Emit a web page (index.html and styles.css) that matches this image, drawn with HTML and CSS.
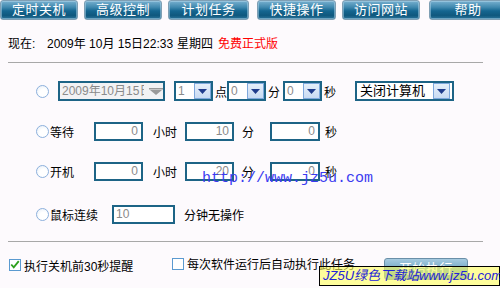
FILE: index.html
```html
<!DOCTYPE html>
<html>
<head>
<meta charset="utf-8">
<link rel="stylesheet" href="styles.css">
</head>
<body>
<div class="app">
  <div class="toolbar">
    <div class="tbtn">定时关机</div>
    <div class="tbtn">高级控制</div>
    <div class="tbtn">计划任务</div>
    <div class="tbtn">快捷操作</div>
    <div class="tbtn">访问网站</div>
    <div class="tbtn">帮助</div>
  </div>
  <div class="status">
    <span class="now">现在:</span>
    <span class="date">2009年 10月 15日22:33</span>
    <span class="week">星期四</span>
    <span class="free">免费正式版</span>
  </div>
  <div class="rule"></div>
  <div class="rows">
    <div class="row">
      <span class="radio"></span>
      <div class="combo combo-date">
        <span class="ctext">2009年10月15日</span>
        <svg class="darr" width="14" height="8" viewBox="0 0 14 8"><rect x="0" y="0" width="14" height="1.5" fill="#9a9a9a"/><polygon points="1,2 13,2 7,7" fill="#9a9a9a"/></svg>
      </div>
      <div class="combo combo-num">
        <span class="ctext">1</span>
        <span class="abtn"><svg width="9" height="5" viewBox="0 0 9 5"><polygon points="0,0 9,0 4.5,5" fill="#1f3c8c"/></svg></span>
      </div>
      <span class="u1">点</span>
      <div class="combo combo-num">
        <span class="ctext">0</span>
        <span class="abtn"><svg width="9" height="5" viewBox="0 0 9 5"><polygon points="0,0 9,0 4.5,5" fill="#1f3c8c"/></svg></span>
      </div>
      <span class="u2">分</span>
      <div class="combo combo-num">
        <span class="ctext">0</span>
        <span class="abtn"><svg width="9" height="5" viewBox="0 0 9 5"><polygon points="0,0 9,0 4.5,5" fill="#1f3c8c"/></svg></span>
      </div>
      <span class="u3">秒</span>
      <div class="combo combo-act">
        <span class="ctext act">关闭计算机</span>
        <span class="abtn"><svg width="9" height="5" viewBox="0 0 9 5"><polygon points="0,0 9,0 4.5,5" fill="#1f3c8c"/></svg></span>
      </div>
    </div>
    <div class="row">
      <span class="radio"></span>
      <span class="lbl">等待</span>
      <div class="num w49">0</div>
      <span class="unit-h">小时</span>
      <div class="num w49">10</div>
      <span class="unit-m">分</span>
      <div class="num w50">0</div>
      <span class="unit-s">秒</span>
    </div>
    <div class="row">
      <span class="radio"></span>
      <span class="lbl">开机</span>
      <div class="num w49">0</div>
      <span class="unit-h">小时</span>
      <div class="num w49">20</div>
      <span class="unit-m">分</span>
      <div class="num w50">0</div>
      <span class="unit-s">秒</span>
    </div>
    <div class="row row-last">
      <span class="radio"></span>
      <span class="lbl lbl-wide">鼠标连续</span>
      <div class="num w63 left">10</div>
      <span class="unit-idle">分钟无操作</span>
    </div>
  </div>
  <div class="rule rule2"></div>
  <div class="bottom">
    <label class="chk chk1">
      <span class="cbox"><svg width="12" height="11" viewBox="0 0 12 11"><path d="M1.5 5.5 L4.5 9 L10.5 1.5" fill="none" stroke="#2ea01c" stroke-width="2.2"/></svg></span>
      <span>执行关机前30秒提醒</span>
    </label>
    <label class="chk chk2">
      <span class="cbox"></span>
      <span>每次软件运行后自动执行此任务</span>
    </label>
    <div class="startbtn">开始执行</div>
  </div>
  <div class="wm-url">http://www.jz5u.com</div>
  <div class="wm-box">JZ5U绿色下载站www.jz5u.com</div>
</div>
</body>
</html>
```

FILE: styles.css
```css
html, body {
  margin: 0;
  padding: 0;
  background: #fdfafd;
}
body {
  font-family: "Liberation Sans", "Noto Sans CJK SC", sans-serif;
  font-size: 12px;
  color: #000;
}
.app {
  position: relative;
  width: 500px;
  height: 288px;
  overflow: hidden;
}
.toolbar {
  display: flex;
  gap: 6px;
  height: 20px;
}
.tbtn {
  width: 78px;
  height: 20px;
  box-sizing: border-box;
  border: 1px solid #7f9fb4;
  border-radius: 3px;
  background: linear-gradient(#78b0cf 0%, #3f88ae 35%, #156690 55%, #0f587e 80%, #2a739a 100%);
  box-shadow: inset 0 0 0 1px rgba(180, 215, 235, 0.5);
  color: #fff;
  font-size: 13px;
  line-height: 18px;
  text-align: center;
  letter-spacing: 0.5px;
  flex: none;
}
.toolbar .tbtn:nth-child(3) { width: 81px; }
.toolbar .tbtn:nth-child(4) { width: 79px; margin-left: 2px; }
.toolbar .tbtn:nth-child(6) { margin-left: 3px; }
.status {
  margin-top: 16px;
  height: 16px;
  line-height: 16px;
  padding-left: 8px;
  display: flex;
  white-space: pre;
}
.now { width: 39px; }
.date { width: 130px; }
.week { width: 41px; }
.free { color: #f00; }
.rule {
  margin-top: 10px;
  margin-left: 8px;
  width: 475px;
  height: 1px;
  background: #a8a8a8;
}
.rule2 { margin-top: 4px; }
.rows {
  display: flex;
  flex-direction: column;
}
.row {
  display: flex;
  align-items: center;
  height: 40px;
  padding-left: 36px;
}
.row:first-child { margin-top: 8px; }
.row-last { height: 46px; }
.radio {
  width: 13px;
  height: 13px;
  box-sizing: border-box;
  border-radius: 50%;
  border: 1px solid #8cb0dc;
  background: radial-gradient(circle at 60% 65%, #fff 40%, #e4ecf6 100%);
  flex: none;
}
.combo {
  height: 20px;
  box-sizing: border-box;
  border: 2px solid #1d6486;
  background: #fff;
  display: flex;
  align-items: center;
  position: relative;
  flex: none;
}
.ctext {
  padding-left: 2px;
  color: #8a8a8a;
  font-size: 12px;
  line-height: 16px;
  flex: 1;
  overflow: hidden;
  white-space: nowrap;
}
.combo-date {
  width: 107px;
  margin-left: 9px;
  background: #f2f2f4;
}
.combo-date .ctext { width: 82px; flex: none; }
.darr { margin-left: 5px; margin-top: 1px; }
.combo-num { width: 39px; }
.row > .combo-num:nth-of-type(2) { margin-left: 9px; }
.abtn {
  width: 17px;
  height: 16px;
  box-sizing: border-box;
  border: 1px solid #7ea8dc;
  background: linear-gradient(#e6effa, #c8dbf3);
  display: flex;
  align-items: center;
  justify-content: center;
  flex: none;
}
.u1 { width: 12px; margin-left: 2px; }
.u2 { width: 12px; margin-left: 2px; margin-right: 3px; }
.u3 { width: 12px; margin-left: 2px; margin-right: 19px; }
.combo-act { width: 99px; }
.combo-act .act { color: #000; font-size: 13px; padding-left: 3px; }
.combo-act .abtn { margin-right: 2px; }
.lbl { width: 44px; margin-left: 1px; }
.lbl-wide { width: 62px; }
.num {
  height: 19px;
  box-sizing: border-box;
  border: 2px solid #1d6486;
  background: #fff;
  color: #8a8a8a;
  text-align: right;
  padding-right: 3px;
  line-height: 15px;
  flex: none;
}
.num.left { text-align: left; padding-left: 2px; }
.w49 { width: 49px; }
.w50 { width: 50px; }
.w63 { width: 63px; }
.unit-h { width: 32px; margin-left: 10px; }
.unit-m { width: 28px; margin-left: 8px; }
.unit-s { margin-left: 5px; }
.unit-idle { margin-left: 9px; }
.bottom {
  display: flex;
  align-items: center;
  height: 46px;
  padding-left: 9px;
}
.chk {
  display: flex;
  align-items: center;
  gap: 3px;
  font-size: 12px;
  flex: none;
  white-space: nowrap;
}
.chk1 { width: 163px; }
.chk2 { width: 212px; margin-top: -3px; }
.cbox {
  width: 12px;
  height: 12px;
  box-sizing: border-box;
  border: 1px solid #5b9ad0;
  background: #fff;
  display: flex;
  align-items: center;
  justify-content: center;
  flex: none;
}
.cbox svg { margin-top: -1px; }
.startbtn {
  flex: none;
  margin-top: 8px;
  width: 84px;
  height: 22px;
  box-sizing: border-box;
  border: 1px solid #6a8fa8;
  border-radius: 3px;
  background: linear-gradient(#a6cbe0, #78a9c8 50%, #6598b8);
  color: #fff;
  font-size: 13px;
  line-height: 20px;
  text-align: center;
  letter-spacing: 0.5px;
}
.wm-url {
  position: absolute;
  left: 202px;
  top: 171px;
  font-family: "Liberation Mono", monospace;
  font-size: 15px;
  color: #3c3cf0;
  line-height: 16px;
}
.wm-box {
  position: absolute;
  left: 319px;
  top: 266px;
  width: 181px;
  height: 20px;
  box-sizing: border-box;
  border: 1px solid #000;
  background: rgba(255, 255, 90, 0.6);
  color: #2323d8;
  font-style: italic;
  font-size: 13px;
  line-height: 18px;
  padding-left: 3px;
  white-space: nowrap;
}
```
